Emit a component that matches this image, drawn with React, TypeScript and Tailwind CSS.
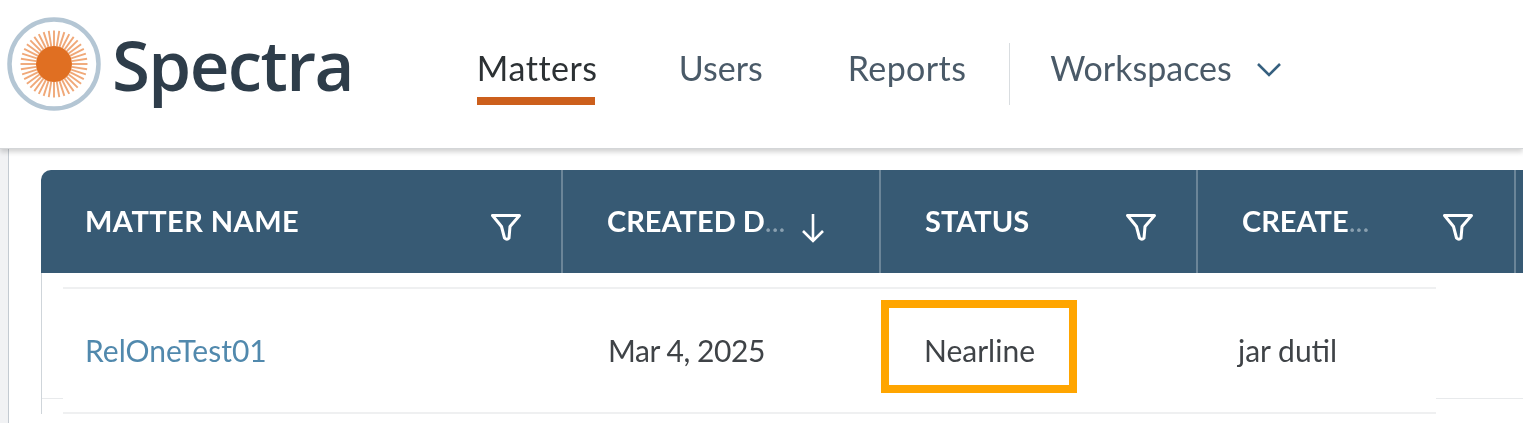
const rays = Array.from({ length: 40 }, (_, i) => (i * 360) / 40);

const Logo = () => (
  <svg width="96" height="96" viewBox="0 0 96 96" className="shrink-0">
    <circle cx="48" cy="48" r="44.5" fill="none" stroke="#b4c6d4" strokeWidth="4.5" />
    {rays.map((deg) => (
      <line
        key={deg}
        x1="48"
        y1="30"
        x2="48"
        y2="14.5"
        stroke="#f0a878"
        strokeWidth="1.9"
        transform={`rotate(${deg} 48 48)`}
      />
    ))}
    <circle cx="48" cy="48" r="18" fill="#e06f22" />
  </svg>
);

const FilterIcon = () => (
  <svg width="32" height="30" viewBox="0 0 32 30" fill="none" className="shrink-0">
    <path
      d="M2.5 3.5H29.5L20 14.5L19 26Q17 28.5 14.5 26L11.5 14.5Z"
      stroke="#ffffff"
      strokeWidth="3"
      strokeLinejoin="round"
    />
  </svg>
);

const SortIcon = () => (
  <svg width="26" height="32" viewBox="0 0 26 32" fill="none" className="shrink-0">
    <path d="M13 2V29M3 19L13 29L23 19" stroke="#ffffff" strokeWidth="2.6" />
  </svg>
);

const columns = [
  { label: "MATTER NAME", width: "w-[522px]", textWidth: "w-[403px] tracking-[0.45px]", icon: <FilterIcon />, iconLeft: "pl-[2px]" },
  { label: "CREATED D", width: "w-[318px]", textWidth: "w-[187px]", icon: <SortIcon />, dots: true, iconLeft: "pl-[6px]" },
  { label: "STATUS", width: "w-[317px]", textWidth: "w-[200px]", icon: <FilterIcon />, iconLeft: "" },
  { label: "CREATE", width: "w-[318px]", textWidth: "w-[200px]", icon: <FilterIcon />, dots: true, iconLeft: "" },
];

const navItems = [
  { label: "Users", className: "ml-[84px]" },
  { label: "Reports", className: "ml-[85px] tracking-[0.4px]" },
];

export default function App() {
  return (
    <div className="h-[423px] w-[1523px] overflow-hidden bg-white font-['Lato',sans-serif] blur-[0.5px]">
      <header className="relative z-10 flex h-[149px] items-start border-b border-[#d4d6d8] bg-white pl-[6px] shadow-[0_3px_5px_rgba(0,0,0,0.18)]">
        <div className="mt-[16px] flex items-center">
          <Logo />
          <span className="ml-[10px] font-['Open_Sans',sans-serif] text-[69px] leading-none font-semibold tracking-[-1.6px] text-[#2e3d4a]">
            Spectra
          </span>
        </div>
        <nav className="ml-[124px] flex items-start text-[34px] leading-none text-[#4a5a68]">
          <div className="mt-[51px] flex h-[54px] w-[118px] flex-col justify-between text-center tracking-[0.55px] text-[#2c3134]">
            <span>Matters</span>
            <span className="h-[8px] bg-[#cc5f1c]" />
          </div>
          {navItems.map((item) => (
            <span key={item.label} className={`mt-[51px] ${item.className}`}>
              {item.label}
            </span>
          ))}
          <div className="mt-[43px] ml-[43px] h-[62px] border-l border-[#d9dde0]" />
          <span className="mt-[51px] ml-[40px]">Workspaces</span>
          <svg width="26" height="15" viewBox="0 0 26 15" fill="none" className="mt-[62px] ml-[24px]">
            <path d="M2 2L13 13L24 2" stroke="#36607f" strokeWidth="2.6" />
          </svg>
        </nav>
      </header>

      <div className="flex h-[274px]">
        <div className="w-[9px] shrink-0 border-r border-[#c3cad1] bg-[#f1f2f4]" />
        <main className="min-w-0 flex-1 pt-[21px] pl-[32px]">
          <div className="flex h-[103px] w-[1500px] overflow-hidden rounded-tl-[10px] bg-[#375a74]">
            {columns.map((col) => (
              <div
                key={col.label}
                className={`flex h-full shrink-0 items-start border-r-2 border-[#6b8598] pt-[33px] pl-[44px] ${col.width}`}
              >
                <span
                  className={`flex items-center text-[29px] leading-[36px] font-bold text-white ${col.textWidth}`}
                >
                  {col.label}
                  {col.dots && <span className="font-normal text-[#8aa0b0]">...</span>}
                </span>
                <span className={`mt-[9px] ${col.iconLeft}`}>{col.icon}</span>
              </div>
            ))}
          </div>

          <div className="flex border-l border-[#cfd5da]">
            <div className="h-[126px] w-[21px] shrink-0 border-b border-[#e8eaec]" />
            <div className="w-[1373px] shrink-0 pt-[14px]">
              <div className="grid h-[127px] grid-cols-[500px_317px_317px_1fr] items-center border-y-2 border-[#eff0f1] pb-[2px] text-[30px] leading-none text-[#3f4347]">
                <a className="pl-[22px] text-[#5189ad]">RelOneTest01</a>
                <span className="pl-[45px] tracking-[-0.45px]">Mar 4, 2025</span>
                <div className="relative pl-[44px]">
                  {/* highlight annotation drawn over the cell */}
                  <span>Nearline</span>
                  <div className="absolute top-[-35px] left-[1px] h-[93px] w-[196px] border-[8px] border-[#ffa500]" />
                </div>
                <span className="pl-[41px]">jar dutil</span>
              </div>
            </div>
            <div className="h-[126px] flex-1 border-b border-[#e8eaec]" />
          </div>
        </main>
      </div>
    </div>
  );
}
